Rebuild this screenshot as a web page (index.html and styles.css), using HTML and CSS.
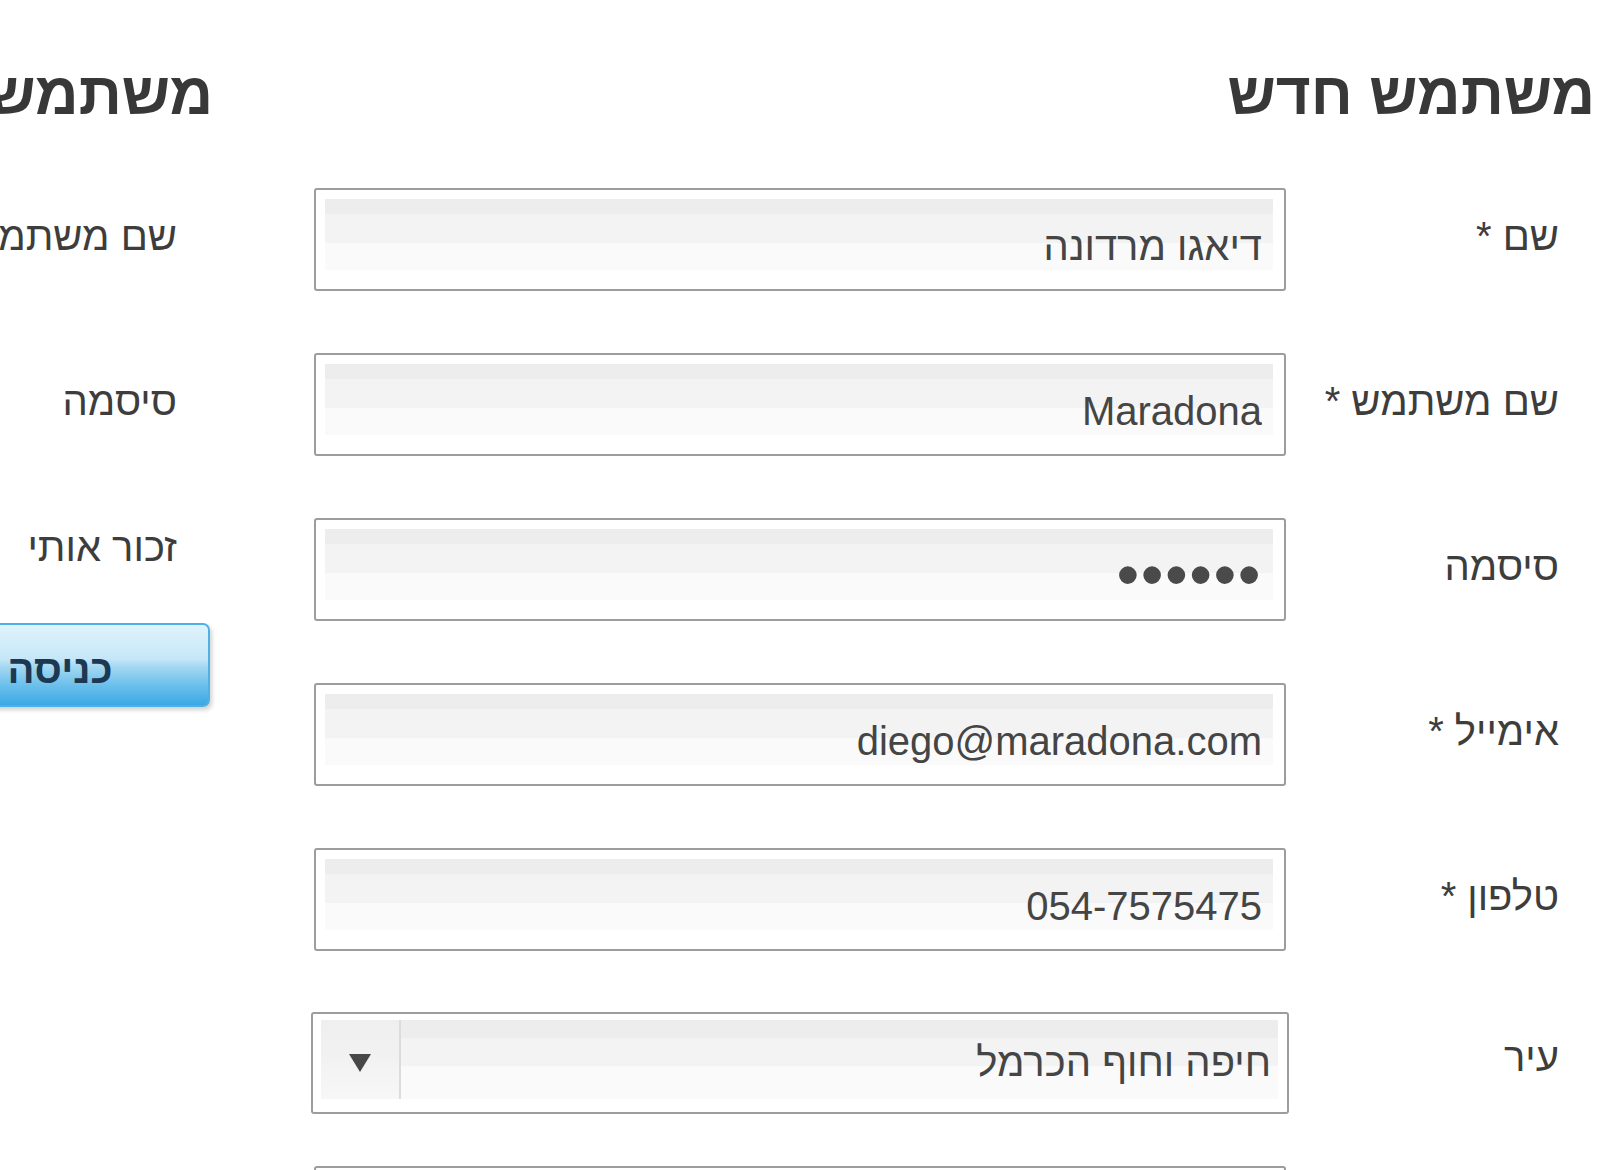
FILE: index.html
```html
<!DOCTYPE html>
<html lang="he" dir="rtl">
<head>
<meta charset="utf-8">
<title>הרשמה</title>
<link rel="stylesheet" href="styles.css">
</head>
<body>
<div class="page">
  <section class="panel panel-new">
    <h2 class="panel-title">משתמש חדש</h2>
    <form class="form">
      <div class="row"><label class="label">שם *</label><input class="field" type="text" value="דיאגו מרדונה"></div>
      <div class="row"><label class="label">שם משתמש *</label><input class="field" type="text" value="Maradona" dir="ltr"></div>
      <div class="row"><label class="label">סיסמה</label><input class="field field-password" type="password" value="diego1"></div>
      <div class="row"><label class="label">אימייל *</label><input class="field" type="text" value="diego@maradona.com" dir="ltr"></div>
      <div class="row"><label class="label">טלפון *</label><input class="field" type="text" value="054-7575475" dir="ltr"></div>
      <div class="row row-select"><label class="label label-select">עיר</label>
        <div class="select">
          <span class="select-value">חיפה וחוף הכרמל</span>
          <span class="select-btn"><svg class="select-arrow" viewBox="0 0 24 20" width="24" height="20"><path d="M1 1 L23 1 L12 19 Z" fill="#474747"/></svg></span>
        </div>
      </div>
      <div class="row"><label class="label">כתובת</label><input class="field" type="text" value=""></div>
    </form>
  </section>
  <section class="panel panel-login">
    <h2 class="panel-title">משתמש רשום</h2>
    <form class="form">
      <div class="row"><label class="label">שם משתמש</label><input class="field" type="text" value=""></div>
      <div class="row row-short"><label class="label">סיסמה</label><input class="field" type="password" value=""></div>
      <div class="row row-check"><label class="label">זכור אותי</label><input class="check" type="checkbox"></div>
      <button class="btn-login" type="button">כניסה</button>
    </form>
  </section>
</div>
</body>
</html>
```
FILE: styles.css
```css
html, body {
  margin: 0;
  padding: 0;
  background: #ffffff;
  overflow: hidden;
}
body {
  font-family: "Liberation Sans", Arial, sans-serif;
  color: #3d3d3d;
  direction: rtl;
}
.page {
  width: 1600px;
  height: 1170px;
  box-sizing: border-box;
  padding: 58px 8px 0 0;
  display: flex;
  gap: 101px;
  overflow: hidden;
}
.panel {
  flex: 0 0 1278px;
}
.panel-title {
  margin: 0 -3px 58px 0;
  font-size: 60px;
  line-height: 72px;
  font-weight: bold;
  color: #383838;
}
.form {
  display: flex;
  flex-direction: column;
}
.row {
  display: flex;
  align-items: flex-start;
  margin-bottom: 62px;
}
.label {
  flex: 0 0 306px;
  box-sizing: border-box;
  padding: 24px 33px 0 0;
  font-size: 40px;
  line-height: 48px;
  color: #3d3d3d;
}
.field {
  flex: 0 0 972px;
  width: 972px;
  height: 103px;
  box-sizing: border-box;
  margin: 0;
  padding: 13px 22px 0 22px;
  border: 2px solid #9d9d9d;
  border-radius: 3px;
  font-family: "Liberation Sans", Arial, sans-serif;
  font-size: 40px;
  color: #454545;
  text-align: right;
  outline: none;
  background-color: #ffffff;
  background-image: linear-gradient(to bottom, #ededed 0, #ededed 15px, #f3f3f4 15px, #f3f3f4 44px, #fafafb 44px, #fafafb 71px);
  background-repeat: no-repeat;
  background-position: 9px 9px;
  background-size: calc(100% - 20px) 71px;
}
.field-password {
  font-size: 65px;
  letter-spacing: 1.5px;
  padding-top: 9px;
  color: #4a4a4a;
}
.row-select {
  margin-bottom: 52px;
}
.label-select {
  padding-top: 20px;
}
.select {
  flex: 0 0 978px;
  width: 978px;
  height: 102px;
  margin: -1px -3px 0 0;
  box-sizing: border-box;
  border: 2px solid #9d9d9d;
  border-radius: 3px;
  display: flex;
  align-items: flex-start;
  padding: 6px 9px 15px 8px;
  background-color: #fff;
}
.select-value {
  flex: 1;
  height: 79px;
  box-sizing: border-box;
  padding: 18px 7px 0 0;
  font-size: 40px;
  line-height: 48px;
  color: #454545;
  background-image: linear-gradient(to bottom, #ededed 0, #ededed 18px, #f3f3f4 18px, #f3f3f4 46px, #fafafb 46px, #fafafb 79px);
}
.select-btn {
  flex: 0 0 80px;
  height: 79px;
  box-sizing: border-box;
  border-right: 2px solid #dcdcdc;
  display: flex;
  align-items: center;
  justify-content: center;
  padding-top: 6px;
  background-image: linear-gradient(to bottom, #efefef 0, #f1f1f2 40%, #f7f7f8 100%);
}
.row-short {
  margin-bottom: 43px;
}
.row-check {
  height: 82px;
  margin-bottom: 42px;
}
.check {
  margin: 30px 20px 0 0;
  width: 30px;
  height: 30px;
}
.btn-login {
  align-self: flex-start;
  width: 300px;
  height: 84px;
  margin: 0;
  padding: 8px 0 0 0;
  border: 2px solid #4eb0e6;
  border-radius: 7px;
  font-family: "Liberation Sans", Arial, sans-serif;
  font-size: 40px;
  font-weight: bold;
  color: #1c3852;
  text-align: center;
  background: linear-gradient(to bottom, #e0f3fc 0%, #c6e7f8 42%, #a4d8f2 52%, #6cc0ec 75%, #3aa8e5 100%);
  box-shadow: 2px 3px 4px rgba(0, 0, 0, 0.18);
}
```
